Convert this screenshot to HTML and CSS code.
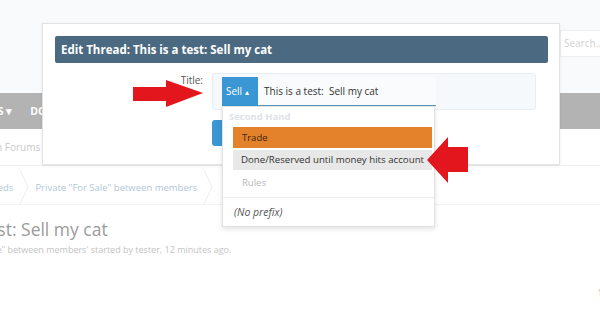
FILE: index.html
```html
<!DOCTYPE html>
<html lang="en">
<head>
    <meta charset="UTF-8">
    <title>Edit Thread</title>
    <link rel="stylesheet" href="styles.css">
</head>
<body>

<div class="page">
    <div class="top">
        <div class="search">Search...</div>
    </div>
    <div class="nav">
        <span class="nav-item first">CLASSIFIEDS &#9662;</span>
        <span class="nav-item">DONATE</span>
    </div>
    <div class="subnav">
        <span class="subnav-item">Main Forums</span>
    </div>
    <div class="crumbs">
        <span class="crumb first">Classifieds</span>
        <svg class="chev" width="10" height="34" viewBox="0 0 10 34"><polyline points="1,0 9,17 1,34" fill="none" stroke="#ececec" stroke-width="1"/></svg>
        <span class="crumb">Private "For Sale" between members</span>
        <svg class="chev" width="10" height="34" viewBox="0 0 10 34"><polyline points="1,0 9,17 1,34" fill="none" stroke="#ececec" stroke-width="1"/></svg>
    </div>
    <h1 class="thread-title">This is a test: Sell my cat</h1>
    <p class="thread-meta">Discussion in 'Private "For Sale" between members' started by tester, 12 minutes ago.</p>
    <div class="pager"><span>1</span></div>
    <div class="bottom"></div>
</div>

<div class="modal">
    <h2 class="modal-head">Edit Thread: This is a test: Sell my cat</h2>
    <div class="row">
        <label class="row-label" for="title">Title:</label>
        <div class="field">
            <span class="prefix-btn">Sell <span class="caret">&#9652;</span></span>
            <span class="title-input" id="title">This is a test:&nbsp; Sell my cat</span>
        </div>
    </div>
    <div class="row">
        <span class="row-label"></span>
        <button class="save">Save</button>
    </div>
</div>

<div class="menu">
    <div class="menu-group">Second Hand</div>
    <div class="menu-item trade">Trade</div>
    <div class="menu-item done">Done/Reserved until money hits account</div>
    <div class="menu-item muted">Rules</div>
    <div class="menu-sep"></div>
    <div class="menu-item none">(No prefix)</div>
</div>

<!-- annotation arrows -->
<svg class="arrow arrow-right" width="72" height="32" viewBox="0 0 72 32">
    <polygon points="0,9 33,9 33,2 70,15 33,29 33,23 0,23" fill="#e3161e"/>
</svg>
<svg class="arrow arrow-left" width="44" height="48" viewBox="0 0 44 48">
    <polygon points="1,24 22,1 22,11 42,11 42,36 22,36 22,47" fill="#e3161e"/>
</svg>

</body>
</html>
```

FILE: styles.css
```css
body {
    margin: 0;
    width: 600px;
    height: 320px;
    overflow: hidden;
    position: relative;
    font-family: "Open Sans", Arial, sans-serif;
    background-color: #fff;
}
.page {
    width: 600px;
    height: 320px;
    overflow: hidden;
}
.top {
    height: 93px;
    background-color: #f9fafb;
    display: flex;
    justify-content: flex-end;
    align-items: flex-start;
    overflow: hidden;
}
.search {
    flex: none;
    margin-top: 30px;
    margin-right: -15px;
    width: 50px;
    height: 25px;
    padding-left: 3px;
    background-color: #fff;
    border: 1px solid #eceef0;
    color: #cfcfcf;
    font-size: 10px;
    line-height: 25px;
    white-space: nowrap;
}
.nav {
    height: 36px;
    background-color: #b3b3b3;
    display: flex;
    align-items: center;
    gap: 18px;
    white-space: nowrap;
}
.nav-item {
    color: #fff;
    font-size: 10.5px;
    font-weight: bold;
}
.nav-item.first {
    margin-left: -60px;
}
.subnav {
    height: 36px;
    border-bottom: 1px solid #f0f0f0;
    display: flex;
    align-items: center;
    white-space: nowrap;
}
.subnav-item {
    margin-left: -21px;
    color: #c8c8c8;
    font-size: 10px;
}
.crumbs {
    margin-top: 4px;
    height: 34px;
    border-bottom: 1px solid #f2f2f2;
    display: flex;
    align-items: center;
    white-space: nowrap;
}
.crumb {
    color: #b2c7da;
    font-size: 9.5px;
    padding: 0 6px;
}
.crumb.first {
    margin-left: -39px;
}
.chev {
    flex: none;
}
.thread-title {
    margin: 12px 0 0 -88px;
    white-space: nowrap;
    font-size: 17.5px;
    font-weight: normal;
    color: #9b9b9b;
    line-height: 24px;
}
.thread-meta {
    margin: 2px 0 0 -126px;
    white-space: nowrap;
    font-size: 9px;
    line-height: 14px;
    color: #c3c3c3;
}
.pager {
    display: flex;
    justify-content: flex-end;
    margin-top: 29px;
    margin-right: -3px;
    font-size: 10px;
    color: #b8b8b8;
}
.bottom {
    margin-top: 20px;
    height: 20px;
    border-top: 1px solid #f2f2f2;
    background-color: #fcfcfc;
}

.modal {
    position: absolute;
    left: 42px;
    top: 23px;
    width: 493px;
    height: 128px;
    padding: 12px 11px 0 12px;
    background-color: #fff;
    border: 1px solid #e3e3e3;
    box-shadow: 0 1px 3px rgba(0, 0, 0, 0.08);
}
.modal-head {
    margin: 0;
    height: 27px;
    padding-left: 6px;
    background-color: #4b6a81;
    border-radius: 2px;
    color: #fff;
    font-size: 11.5px;
    font-weight: bold;
    line-height: 27px;
}
.row {
    display: flex;
    gap: 9px;
    margin-top: 10px;
}
.row-label {
    width: 148px;
    text-align: right;
    font-size: 10px;
    color: #555;
    line-height: 14px;
}
.field {
    display: flex;
    align-items: stretch;
    width: 304px;
    height: 29px;
    padding: 3px 9px;
    background-color: #f6f9fc;
    border: 1px solid #e8eef3;
    border-radius: 3px;
}
.prefix-btn {
    width: 28px;
    background-color: #3a97d4;
    color: #fff;
    font-size: 10px;
    line-height: 29px;
    padding: 0 4px;
}
.caret {
    font-size: 8px;
}
.title-input {
    flex: 1;
    margin-right: 90px;
    padding-left: 6px;
    font-size: 10px;
    line-height: 29px;
    color: #333;
    border-bottom: 1px solid #5b97bd;
    background-color: #f9fbfd;
}
.save {
    height: 26px;
    width: 60px;
    border: none;
    border-radius: 3px;
    background-color: #3a97d4;
    color: #fff;
    font-family: inherit;
}

.menu {
    position: absolute;
    left: 222px;
    top: 106px;
    width: 211px;
    height: 119px;
    background-color: #fff;
    border: 1px solid #e2e2e2;
    box-shadow: 0 2px 5px rgba(0, 0, 0, 0.12);
}
.menu-group {
    padding: 3px 0 0 6px;
    height: 16px;
    font-size: 9.5px;
    font-weight: bold;
    color: #dfe3e7;
}
.menu-item {
    margin: 1px 2px 0 10px;
    padding-left: 9px;
    height: 21px;
    line-height: 21px;
    font-size: 9.5px;
    color: #333;
    white-space: nowrap;
}
.menu-item.done {
    margin-top: 2px;
    height: 20px;
    line-height: 20px;
    padding-left: 8px;
    font-size: 9.7px;
    background-color: #e8e8e8;
}
.menu-item.trade {
    background-color: #e3822a;
    color: #3b2412;
}
.menu-item.muted {
    height: 24px;
    line-height: 24px;
    color: #b8b8b8;
}
.menu-sep {
    margin-top: 2px;
    border-top: 1px solid #ececec;
}
.menu-item.none {
    margin: 4px 0 0 2px;
    font-size: 10.5px;
    font-style: italic;
    color: #555;
}

.arrow {
    position: absolute;
}
.arrow-right {
    left: 133px;
    top: 78px;
}
.arrow-left {
    left: 426px;
    top: 136px;
}
```
